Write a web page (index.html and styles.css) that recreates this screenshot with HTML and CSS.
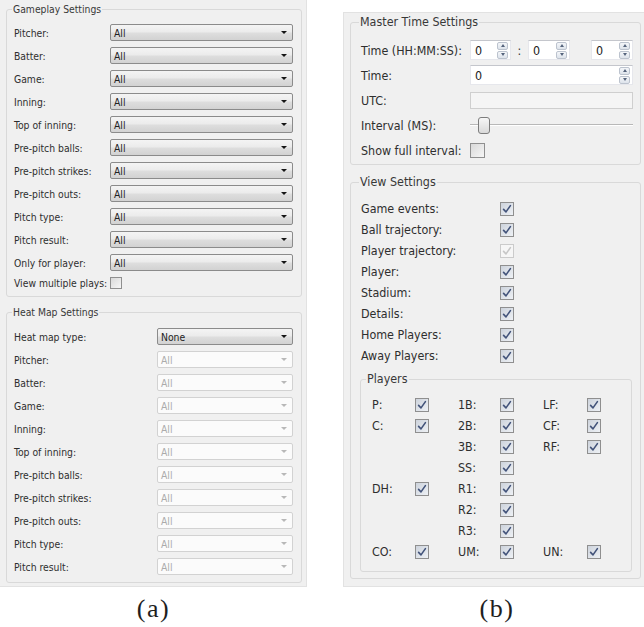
FILE: index.html
```html
<!DOCTYPE html>
<html>
<head>
<meta charset="utf-8">
<link rel="stylesheet" href="styles.css">
</head>
<body>
<div class="figure">
  <div class="col col-a">
    <div class="panel panel-a">
      <fieldset class="group g-left g-gameplay">
        <legend>Gameplay Settings</legend>
        <div class="rows">
          <div class="row"><span class="lbl">Pitcher:</span><div class="combo"><span>All</span><i class="arrow"></i></div></div>
          <div class="row"><span class="lbl">Batter:</span><div class="combo"><span>All</span><i class="arrow"></i></div></div>
          <div class="row"><span class="lbl">Game:</span><div class="combo"><span>All</span><i class="arrow"></i></div></div>
          <div class="row"><span class="lbl">Inning:</span><div class="combo"><span>All</span><i class="arrow"></i></div></div>
          <div class="row"><span class="lbl">Top of inning:</span><div class="combo"><span>All</span><i class="arrow"></i></div></div>
          <div class="row"><span class="lbl">Pre-pitch balls:</span><div class="combo"><span>All</span><i class="arrow"></i></div></div>
          <div class="row"><span class="lbl">Pre-pitch strikes:</span><div class="combo"><span>All</span><i class="arrow"></i></div></div>
          <div class="row"><span class="lbl">Pre-pitch outs:</span><div class="combo"><span>All</span><i class="arrow"></i></div></div>
          <div class="row"><span class="lbl">Pitch type:</span><div class="combo"><span>All</span><i class="arrow"></i></div></div>
          <div class="row"><span class="lbl">Pitch result:</span><div class="combo"><span>All</span><i class="arrow"></i></div></div>
          <div class="row"><span class="lbl">Only for player:</span><div class="combo"><span>All</span><i class="arrow"></i></div></div>
          <div class="row row-cb"><span class="lbl">View multiple plays:</span><span class="cb cb-sm off"></span></div>
        </div>
      </fieldset>
      <fieldset class="group g-left g-heat">
        <legend>Heat Map Settings</legend>
        <div class="rows">
          <div class="row"><span class="lbl">Heat map type:</span><div class="combo"><span>None</span><i class="arrow"></i></div></div>
          <div class="row"><span class="lbl">Pitcher:</span><div class="combo dis"><span>All</span><i class="arrow"></i></div></div>
          <div class="row"><span class="lbl">Batter:</span><div class="combo dis"><span>All</span><i class="arrow"></i></div></div>
          <div class="row"><span class="lbl">Game:</span><div class="combo dis"><span>All</span><i class="arrow"></i></div></div>
          <div class="row"><span class="lbl">Inning:</span><div class="combo dis"><span>All</span><i class="arrow"></i></div></div>
          <div class="row"><span class="lbl">Top of inning:</span><div class="combo dis"><span>All</span><i class="arrow"></i></div></div>
          <div class="row"><span class="lbl">Pre-pitch balls:</span><div class="combo dis"><span>All</span><i class="arrow"></i></div></div>
          <div class="row"><span class="lbl">Pre-pitch strikes:</span><div class="combo dis"><span>All</span><i class="arrow"></i></div></div>
          <div class="row"><span class="lbl">Pre-pitch outs:</span><div class="combo dis"><span>All</span><i class="arrow"></i></div></div>
          <div class="row"><span class="lbl">Pitch type:</span><div class="combo dis"><span>All</span><i class="arrow"></i></div></div>
          <div class="row"><span class="lbl">Pitch result:</span><div class="combo dis"><span>All</span><i class="arrow"></i></div></div>
        </div>
      </fieldset>
    </div>
    <div class="caption">(a)</div>
  </div>

  <div class="col col-b">
    <div class="panel panel-b">
      <fieldset class="group g-right g-master">
        <legend>Master Time Settings</legend>
        <div class="mrows">
          <div class="mrow">
            <span class="lbl">Time (HH:MM:SS):</span>
            <div class="field">
              <div class="spin w41"><span>0</span><span class="btns"><i class="up"></i><i class="dn"></i></span></div>
              <span class="sep">:</span>
              <div class="spin w42"><span>0</span><span class="btns"><i class="up"></i><i class="dn"></i></span></div>
              <div class="spin w42 last"><span>0</span><span class="btns"><i class="up"></i><i class="dn"></i></span></div>
            </div>
          </div>
          <div class="mrow">
            <span class="lbl">Time:</span>
            <div class="field">
              <div class="spin wide"><span>0</span><span class="btns"><i class="up"></i><i class="dn"></i></span></div>
            </div>
          </div>
          <div class="mrow">
            <span class="lbl">UTC:</span>
            <div class="field"><div class="lineedit"></div></div>
          </div>
          <div class="mrow">
            <span class="lbl">Interval (MS):</span>
            <div class="field slider"><span class="handle"></span></div>
          </div>
          <div class="mrow">
            <span class="lbl">Show full interval:</span>
            <div class="field"><span class="cb off cb-15"></span></div>
          </div>
        </div>
      </fieldset>

      <fieldset class="group g-right g-view">
        <legend>View Settings</legend>
        <div class="vrows">
          <div class="vrow"><span class="lbl">Game events:</span><span class="cb"><svg viewBox="0 0 12 12"><path d="M2.6 6.4 L5 8.9 L9.4 2.6"/></svg></span></div>
          <div class="vrow"><span class="lbl">Ball trajectory:</span><span class="cb"><svg viewBox="0 0 12 12"><path d="M2.6 6.4 L5 8.9 L9.4 2.6"/></svg></span></div>
          <div class="vrow"><span class="lbl">Player trajectory:</span><span class="cb dis"><svg viewBox="0 0 12 12"><path d="M2.6 6.4 L5 8.9 L9.4 2.6"/></svg></span></div>
          <div class="vrow"><span class="lbl">Player:</span><span class="cb"><svg viewBox="0 0 12 12"><path d="M2.6 6.4 L5 8.9 L9.4 2.6"/></svg></span></div>
          <div class="vrow"><span class="lbl">Stadium:</span><span class="cb"><svg viewBox="0 0 12 12"><path d="M2.6 6.4 L5 8.9 L9.4 2.6"/></svg></span></div>
          <div class="vrow"><span class="lbl">Details:</span><span class="cb"><svg viewBox="0 0 12 12"><path d="M2.6 6.4 L5 8.9 L9.4 2.6"/></svg></span></div>
          <div class="vrow"><span class="lbl">Home Players:</span><span class="cb"><svg viewBox="0 0 12 12"><path d="M2.6 6.4 L5 8.9 L9.4 2.6"/></svg></span></div>
          <div class="vrow"><span class="lbl">Away Players:</span><span class="cb"><svg viewBox="0 0 12 12"><path d="M2.6 6.4 L5 8.9 L9.4 2.6"/></svg></span></div>
        </div>

        <fieldset class="group g-right g-players">
          <legend>Players</legend>
          <div class="pgrid">
            <span>P:</span><span class="cb"><svg viewBox="0 0 12 12"><path d="M2.6 6.4 L5 8.9 L9.4 2.6"/></svg></span>
            <span>1B:</span><span class="cb"><svg viewBox="0 0 12 12"><path d="M2.6 6.4 L5 8.9 L9.4 2.6"/></svg></span>
            <span>LF:</span><span class="cb"><svg viewBox="0 0 12 12"><path d="M2.6 6.4 L5 8.9 L9.4 2.6"/></svg></span>

            <span>C:</span><span class="cb"><svg viewBox="0 0 12 12"><path d="M2.6 6.4 L5 8.9 L9.4 2.6"/></svg></span>
            <span>2B:</span><span class="cb"><svg viewBox="0 0 12 12"><path d="M2.6 6.4 L5 8.9 L9.4 2.6"/></svg></span>
            <span>CF:</span><span class="cb"><svg viewBox="0 0 12 12"><path d="M2.6 6.4 L5 8.9 L9.4 2.6"/></svg></span>

            <span></span><span></span>
            <span>3B:</span><span class="cb"><svg viewBox="0 0 12 12"><path d="M2.6 6.4 L5 8.9 L9.4 2.6"/></svg></span>
            <span>RF:</span><span class="cb"><svg viewBox="0 0 12 12"><path d="M2.6 6.4 L5 8.9 L9.4 2.6"/></svg></span>

            <span></span><span></span>
            <span>SS:</span><span class="cb"><svg viewBox="0 0 12 12"><path d="M2.6 6.4 L5 8.9 L9.4 2.6"/></svg></span>
            <span></span><span></span>

            <span>DH:</span><span class="cb"><svg viewBox="0 0 12 12"><path d="M2.6 6.4 L5 8.9 L9.4 2.6"/></svg></span>
            <span>R1:</span><span class="cb"><svg viewBox="0 0 12 12"><path d="M2.6 6.4 L5 8.9 L9.4 2.6"/></svg></span>
            <span></span><span></span>

            <span></span><span></span>
            <span>R2:</span><span class="cb"><svg viewBox="0 0 12 12"><path d="M2.6 6.4 L5 8.9 L9.4 2.6"/></svg></span>
            <span></span><span></span>

            <span></span><span></span>
            <span>R3:</span><span class="cb"><svg viewBox="0 0 12 12"><path d="M2.6 6.4 L5 8.9 L9.4 2.6"/></svg></span>
            <span></span><span></span>

            <span>CO:</span><span class="cb"><svg viewBox="0 0 12 12"><path d="M2.6 6.4 L5 8.9 L9.4 2.6"/></svg></span>
            <span>UM:</span><span class="cb"><svg viewBox="0 0 12 12"><path d="M2.6 6.4 L5 8.9 L9.4 2.6"/></svg></span>
            <span>UN:</span><span class="cb"><svg viewBox="0 0 12 12"><path d="M2.6 6.4 L5 8.9 L9.4 2.6"/></svg></span>
          </div>
        </fieldset>
      </fieldset>
    </div>
    <div class="caption">(b)</div>
  </div>
</div>
</body>
</html>
```

FILE: styles.css
```css
html, body {
  margin: 0;
  padding: 0;
  background: #ffffff;
}
body {
  width: 644px;
  height: 627px;
  overflow: hidden;
  font-family: "DejaVu Sans Condensed", "DejaVu Sans", sans-serif;
  color: #2e2e2e;
}

.figure {
  display: flex;
  align-items: flex-start;
}
.col {
  flex-shrink: 0;
  display: flex;
  flex-direction: column;
}
.col-a { width: 307px; }
.col-b { width: 308px; margin-left: 36px; margin-top: 12px; }

.panel {
  box-sizing: border-box;
  background: #f0f0f0;
}
.panel-a {
  width: 307px;
  padding: 3px 4px 3px 6px;
  border-right: 1px solid #e2e2e2;
  border-bottom: 1px solid #e2e2e2;
}
.panel-b {
  width: 308px;
  padding: 2px 10px 7px 6px;
  border-top: 1px solid #e2e2e2;
  border-left: 1px solid #e2e2e2;
  border-bottom: 1px solid #e2e2e2;
}

/* group boxes */
.group {
  margin: 0;
  min-width: 0;
  border: 1px solid #d9d9d9;
  border-radius: 3px;
}
.group legend {
  padding: 0 1px;
  margin-left: -2px;
  color: #383838;
}
.g-left { font-size: 10.3px; }
.g-left legend { line-height: 12px; }
.g-right { font-size: 12.4px; }
.g-right legend { line-height: 14px; }

.g-gameplay { padding: 9px 8px 7px 7px; }
.g-heat { padding: 10px 8px 7px 7px; margin-top: 9px; }

.rows {
  display: flex;
  flex-direction: column;
  gap: 6px;
}
.row {
  display: flex;
  align-items: center;
  height: 17px;
}
.row-cb { height: 12px; }
.lbl { flex-shrink: 0; white-space: nowrap; color: #2e2e2e; }
.g-gameplay .lbl { width: 96px; }
.g-heat .lbl { width: 143px; }

/* combo boxes */
.combo {
  flex: 1;
  box-sizing: border-box;
  height: 17px;
  border: 1px solid #8b8b8b;
  border-radius: 2px;
  background: linear-gradient(#f4f4f4 0%, #ebebeb 48%, #dedede 52%, #d2d2d2 100%);
  display: flex;
  align-items: center;
  justify-content: space-between;
  padding: 0 5px 0 3px;
  color: #222222;
}
.combo.dis {
  background: #fbfbfb;
  border-color: #d2d2d2;
  color: #ababab;
}
.arrow {
  width: 0;
  height: 0;
  border-left: 3px solid transparent;
  border-right: 3px solid transparent;
  border-top: 3px solid #151515;
}
.combo.dis .arrow { border-top-color: #b8b8b8; }

/* checkboxes */
.cb {
  box-sizing: border-box;
  width: 14px;
  height: 14px;
  border: 1px solid #8f8f8f;
  background: linear-gradient(135deg, #cdd3dc, #eef1f5);
  display: flex;
  align-items: center;
  justify-content: center;
  flex-shrink: 0;
}
.cb svg { width: 12px; height: 12px; }
.cb path {
  fill: none;
  stroke: #42537a;
  stroke-width: 1.6;
  stroke-linecap: round;
  stroke-linejoin: round;
}
.cb.off { background: linear-gradient(135deg, #d9d9d9, #f6f6f6); }
.cb-sm { width: 12px; height: 12px; }
.cb-15 { width: 15px; height: 15px; }
.cb.dis { border-color: #cbcbcb; background: #f6f6f6; }
.cb.dis path { stroke: #c6c6c6; }

/* master time */
.g-master { padding: 11px 7px 4px 10px; }
.mrows {
  display: flex;
  flex-direction: column;
  gap: 5px;
}
.mrow {
  display: flex;
  align-items: center;
  height: 20px;
}
.g-master .lbl { width: 109px; }
.field {
  flex: 1;
  display: flex;
  align-items: center;
  height: 20px;
}
.spin {
  box-sizing: border-box;
  height: 20px;
  background: #ffffff;
  border: 1px solid #e6e7ec;
  border-top-color: #c4c6cc;
  display: flex;
  align-items: center;
  justify-content: space-between;
  padding: 0 2px 0 4px;
  color: #222222;
}
.w41 { width: 41px; }
.w42 { width: 42px; }
.wide { flex: 1; }
.last { margin-left: auto; }
.sep {
  width: 17px;
  text-align: center;
  color: #333333;
}
.btns {
  display: flex;
  flex-direction: column;
  gap: 1px;
}
.btns i {
  box-sizing: border-box;
  width: 11px;
  height: 8px;
  border: 1px solid #bcc3ce;
  border-radius: 2px;
  background: linear-gradient(#f4f6f9, #dde3eb);
  display: flex;
  align-items: center;
  justify-content: center;
}
.btns i::before {
  content: "";
  width: 0;
  height: 0;
  border-left: 2.5px solid transparent;
  border-right: 2.5px solid transparent;
}
.btns .up::before { border-bottom: 3px solid #55647c; }
.btns .dn::before { border-top: 3px solid #55647c; }

.lineedit {
  flex: 1;
  box-sizing: border-box;
  height: 17px;
  border: 1px solid #cfcfcf;
  background: #f5f5f5;
}

.slider {
  background:
    linear-gradient(#b8b8b8, #b8b8b8) 0 9px / 100% 1px no-repeat,
    linear-gradient(#ffffff, #ffffff) 0 10px / 100% 1px no-repeat;
}
.handle {
  box-sizing: border-box;
  width: 12px;
  height: 17px;
  margin-left: 8px;
  border: 1px solid #7d7d7d;
  border-radius: 3px;
  background: linear-gradient(#f7f7f7, #d9d9d9);
}

/* view settings */
.g-view { margin-top: 10px; padding: 9px 7px 6px 10px; }
.vrows { display: flex; flex-direction: column; }
.vrow {
  display: flex;
  align-items: center;
  height: 21px;
}
.g-view .vrow .lbl { width: 139px; }

.g-players {
  margin: 6px 1px 0 -1px;
  padding: 8px 6px 9px 11px;
}
.g-players legend { margin-left: -6px; }
.pgrid {
  display: grid;
  grid-template-columns: 43px 43px 42px 43px 44px 14px;
  grid-auto-rows: 21px;
  align-items: center;
}

/* captions */
.caption {
  margin-top: 7px;
  text-align: center;
  font-family: "Liberation Serif", "Times New Roman", serif;
  font-size: 26px;
  line-height: 30px;
  letter-spacing: 1.5px;
  color: #1e1e1e;
}
```
